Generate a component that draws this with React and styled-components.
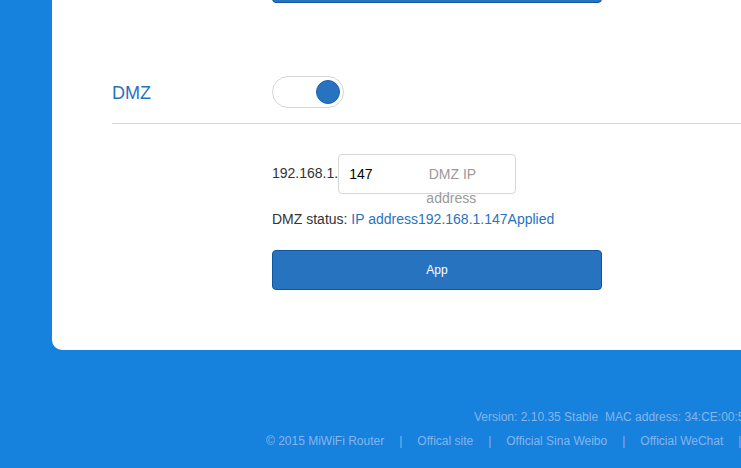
import React from "react";
import styled, { createGlobalStyle } from "styled-components";

const Global = createGlobalStyle`
  *, *::before { box-sizing: border-box; }
  body {
    margin: 0;
    background: #1782dd;
    color: #333;
    font: 14px/24px "Liberation Sans", Arial, sans-serif;
    overflow-x: hidden;
  }
`;

const Page = styled.div`
  padding-left: 52px;
`;

const Panel = styled.main`
  padding: 0 0 60px 60px;
  background: #fff;
  border-bottom-left-radius: 10px;
`;

const Button = styled.button`
  display: block;
  width: 330px;
  height: 40px;
  padding: 0;
  border: 1px solid #0f56a0;
  border-radius: 4px;
  background: #2773c0;
  color: #fff;
  font: 12px "Liberation Sans", Arial, sans-serif;
  cursor: pointer;
`;

const PreviousSection = styled.section`
  margin-left: 160px;
  margin-top: -37px;
`;

const SectionHeader = styled.header`
  display: grid;
  grid-template-columns: 160px 1fr;
  align-items: center;
  margin-top: 73px;
  padding-bottom: 15px;
  border-bottom: 1px solid #d6d6d6;
`;

const Title = styled.h2`
  margin: 0;
  padding-top: 2px;
  color: #2773c0;
  font-size: 18px;
  font-weight: 400;
`;

const Switch = styled.input`
  appearance: none;
  display: block;
  width: 72px;
  height: 32px;
  margin: 0;
  padding: 3px;
  border: 1px solid #d6d6d6;
  border-radius: 16px;
  background: #fff;
  cursor: pointer;

  &::before {
    content: "";
    display: block;
    width: 24px;
    height: 24px;
    border: 1px solid #1d63ae;
    border-radius: 50%;
    background: #2773c0;
  }
  &:checked::before { margin-left: auto; }
`;

const Form = styled.form`
  margin: 30px 0 0 160px;
`;

const AddressRow = styled.div`
  display: flex;
  align-items: center;
  height: 40px;
`;

const Prefix = styled.span`
  padding-bottom: 2px;
`;

const Field = styled.div`
  position: relative;
`;

const AddressInput = styled.input`
  display: block;
  width: 178px;
  height: 40px;
  padding: 0 10px;
  border: 1px solid #d6d6d6;
  border-radius: 4px;
  color: #000;
  font: 14px "Liberation Sans", Arial, sans-serif;
`;

const FieldLabel = styled.label`
  position: absolute;
  top: 8px;
  right: 40px;
  width: 60px;
  color: #999;
  text-align: right;
`;

const Status = styled.p`
  margin: 13px 0 19px;
  strong { color: #2773c0; font-weight: 400; }
`;

const Footer = styled.footer`
  margin-top: 55px;
  color: #86b4ec;
  font-size: 12px;
  white-space: nowrap;
`;

const Version = styled.div`
  display: flex;
  gap: 7px;
  padding-left: 422px;
`;

const Links = styled.nav`
  display: flex;
  gap: 15px;
  padding-left: 214px;
  a { color: inherit; text-decoration: none; }
`;

export default function App() {
  return (
    <>
      <Global />
      <Page>
        <Panel>
          <PreviousSection><Button type="button" aria-label="Apply" /></PreviousSection>
          <SectionHeader>
            <Title id="dmz">DMZ</Title>
            <Switch type="checkbox" role="switch" aria-labelledby="dmz" defaultChecked />
          </SectionHeader>
          <Form onSubmit={(event) => event.preventDefault()}>
            <AddressRow>
              <Prefix>192.168.1.</Prefix>
              <Field>
                <AddressInput id="address" defaultValue="147" />
                <FieldLabel htmlFor="address">DMZ IP address</FieldLabel>
              </Field>
            </AddressRow>
            <Status>DMZ status: <strong>IP address192.168.1.147Applied</strong></Status>
            <Button type="submit">App</Button>
          </Form>
        </Panel>
        <Footer>
          <Version>
            <span>Version: 2.10.35 Stable</span>
            <span>MAC address: 34:CE:00:5</span>
          </Version>
          <Links>
            <span>© 2015 MiWiFi Router</span><span>|</span>
            <a href="#site">Offical site</a><span>|</span>
            <a href="#weibo">Official Sina Weibo</a><span>|</span>
            <a href="#wechat">Official WeChat</a><span>|</span>
          </Links>
        </Footer>
      </Page>
    </>
  );
}
